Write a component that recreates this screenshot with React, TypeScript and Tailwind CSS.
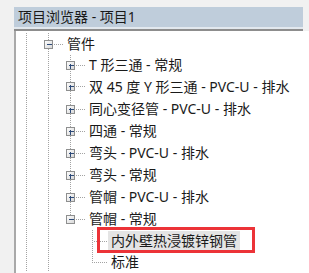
import React from 'react';

type Node = {
  label: string;
  level: number;
  h: number;
  box?: 'plus' | 'minus';
  last?: boolean;
  guides: boolean[];
  selected?: boolean;
};

const rows: Node[] = [
  { label: '管件', level: 1, h: 22, box: 'minus', guides: [true] },
  { label: 'T 形三通 - 常规', level: 2, h: 20, box: 'plus', guides: [true, true] },
  { label: '双 45 度 Y 形三通 - PVC-U - 排水', level: 2, h: 23, box: 'plus', guides: [true, true] },
  { label: '同心变径管 - PVC-U - 排水', level: 2, h: 22, box: 'plus', guides: [true, true] },
  { label: '四通 - 常规', level: 2, h: 22, box: 'plus', guides: [true, true] },
  { label: '弯头 - PVC-U - 排水', level: 2, h: 22, box: 'plus', guides: [true, true] },
  { label: '弯头 - 常规', level: 2, h: 22, box: 'plus', guides: [true, true] },
  { label: '管帽 - PVC-U - 排水', level: 2, h: 22, box: 'plus', guides: [true, true] },
  { label: '管帽 - 常规', level: 2, h: 22, box: 'minus', last: true, guides: [true, true] },
  { label: '内外壁热浸镀锌钢管', level: 3, h: 22, guides: [true, true, false], selected: true },
  { label: '标准', level: 3, h: 20, last: true, guides: [true, true, false] },
];

const LINE = '#a3a3a3';

// tree connector drawn per row: ancestor guides, own elbow, +/- box
function Connector({ node }: { node: Node }) {
  const w = 22 * node.level + 26;
  const h = node.h;
  const cy = Math.floor(h / 2) + 0.5;
  const cx = 10 + 22 * node.level + 0.5;
  return (
    <svg width={w} height={h} className="shrink-0" shapeRendering="crispEdges">
      <defs>
        <linearGradient id="bx" x1="0" y1="0" x2="1" y2="1">
          <stop offset="0" stopColor="#ffffff" />
          <stop offset="1" stopColor="#d6d6d6" />
        </linearGradient>
      </defs>
      {node.guides.map((on, i) =>
        on ? (
          <line key={i} x1={10.5 + 22 * i} x2={10.5 + 22 * i} y1={0} y2={h} stroke={LINE} strokeDasharray="1 1" />
        ) : null
      )}
      <line x1={cx} x2={cx} y1={0} y2={node.last ? cy : h} stroke={LINE} strokeDasharray="1 1" />
      <line x1={cx + 1} x2={w - 1} y1={cy} y2={cy} stroke={LINE} strokeDasharray="1 1" />
      {node.box && (
        <g>
          <rect x={cx - 4} y={cy - 4} width={8} height={8} fill="url(#bx)" stroke="#8e8f8f" />
          <line x1={cx - 2} x2={cx + 3} y1={cy} y2={cy} stroke="#2d4a78" />
          {node.box === 'plus' && <line x1={cx} x2={cx} y1={cy - 2} y2={cy + 3} stroke="#2d4a78" />}
        </g>
      )}
    </svg>
  );
}

function Row({ node }: { node: Node }) {
  return (
    <div className={`flex items-center ${node.h === 23 ? 'h-[23px]' : node.h === 20 ? 'h-[20px]' : 'h-[22px]'}`}>
      <Connector node={node} />
      <span
        className={`px-[3px] h-[20px] leading-[20px] whitespace-nowrap ${node.selected ? 'bg-[#e4e4e4]' : ''}`}
      >
        {node.label}
      </span>
    </div>
  );
}

export default function App() {
  return (
    <div
      className="relative w-[309px] h-[273px] overflow-hidden bg-[#f1f1f1] flex flex-col text-[14px] text-[#1a1a1a]"
      style={{ fontFamily: '"Noto Sans", "Noto Sans CJK SC", sans-serif' }}
    >
      <div className="h-[7px] shrink-0" />
      <div className="flex shrink-0">
        <div className="w-[14px] shrink-0" />
        <div className="w-[289px]">
          <div className="h-[20px] bg-[#bfcddb] flex items-center pl-[4px] leading-[20px]">项目浏览器 - 项目1</div>
          <div className="h-[2px] bg-[#e2e8ee]" />
          <div className="h-[2px] bg-[#8d8d8d]" />
        </div>
      </div>
      <div className="flex flex-1 min-h-0">
        <div className="w-[14px] shrink-0" />
        <div className="flex-1 bg-white border-l-2 border-[#a9a9a9] pt-[2px]">
          {rows.map((r, i) => (
            <Row key={i} node={r} />
          ))}
        </div>
      </div>
      <div className="absolute left-[97px] top-[227px] w-[158px] h-[26px] border-[3px] border-[#ec3338]" />
    </div>
  );
}
